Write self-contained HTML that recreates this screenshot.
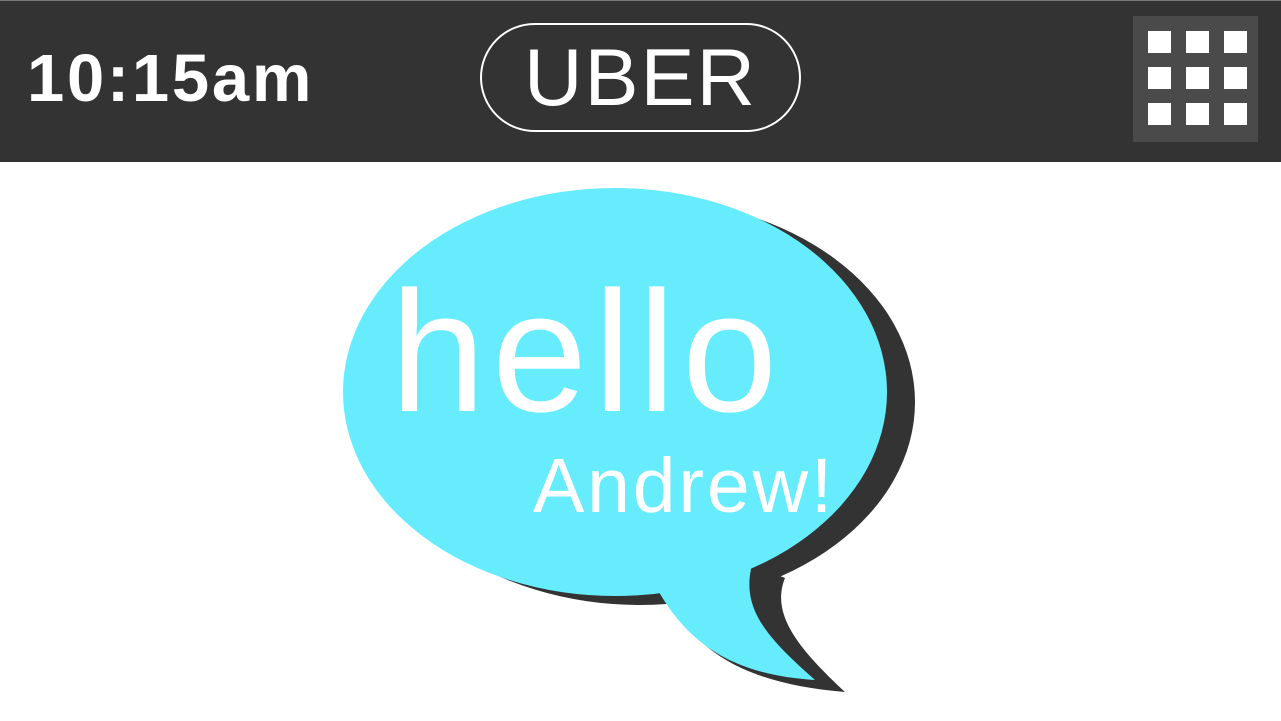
<!DOCTYPE html>
<html><head><style>
html,body{margin:0;padding:0;background:#fff;width:1281px;height:721px;overflow:hidden;font-family:"Liberation Sans",Arial,sans-serif}
.bar{position:absolute;left:0;top:0;width:1281px;height:162px;background:#333;border-top:1px solid #777;box-sizing:border-box}
.time{position:absolute;left:27px;top:38px;font-size:67px;font-weight:bold;color:#fff;letter-spacing:2.7px;line-height:80px}
.pill{position:absolute;left:480px;top:22px;width:317px;height:105px;border:2px solid #fff;border-radius:55px;box-sizing:content-box}
.uber{position:absolute;left:480px;top:30px;width:321px;text-align:center;font-size:81px;color:#fff;line-height:95px;letter-spacing:2px}
.grid{position:absolute;left:1133px;top:15px;width:125px;height:126px;background:#4a4a4a}
.sq{position:absolute;width:23px;height:22px;background:#fff}
</style></head><body>
<div class="bar">
<div class="time">10:15am</div>
<div class="pill"></div>
<div class="uber">UBER</div>
<div class="grid">
<div class="sq" style="left:15px;top:15px"></div><div class="sq" style="left:53px;top:15px"></div><div class="sq" style="left:91px;top:15px"></div>
<div class="sq" style="left:15px;top:51px"></div><div class="sq" style="left:53px;top:51px"></div><div class="sq" style="left:91px;top:51px"></div>
<div class="sq" style="left:15px;top:87px"></div><div class="sq" style="left:53px;top:87px"></div><div class="sq" style="left:91px;top:87px"></div>
</div>
</div>
<svg width="1281" height="721" style="position:absolute;left:0;top:0">
<ellipse cx="640" cy="402" rx="275" ry="203" fill="#333"/>
<path d="M670,600 C700,660 760,685 845,692 C800,650 770,615 785,578 L740,560 Z" fill="#333"/>
<ellipse cx="615" cy="392" rx="272" ry="204" fill="#66ecfd"/>
<path d="M655,585 C690,650 740,675 815,680 C770,640 740,610 752,565 L700,560 Z" fill="#66ecfd"/>
<text x="390" y="411" font-family="Liberation Sans, Arial, sans-serif" font-size="172" fill="#fff" letter-spacing="6">hello</text>
<text x="533" y="512" font-family="Liberation Sans, Arial, sans-serif" font-size="77" fill="#fff" letter-spacing="2.8">Andrew!</text>
</svg>
</body></html>
